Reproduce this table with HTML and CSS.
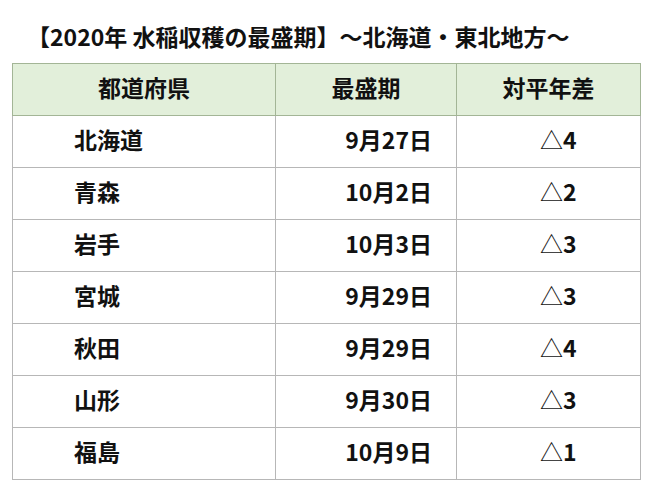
FILE: index.html
```html
<!DOCTYPE html>
<html lang="ja">
<head>
<meta charset="utf-8">
<link rel="stylesheet" href="styles.css">
</head>
<body>
<h1 class="title">【2020年 水稲収穫の最盛期】～北海道・東北地方～</h1>
<table class="harvest">
  <colgroup>
    <col class="c-pref">
    <col class="c-date">
    <col class="c-diff">
  </colgroup>
  <thead>
    <tr><th>都道府県</th><th>最盛期</th><th>対平年差</th></tr>
  </thead>
  <tbody>
    <tr><td class="pref">北海道</td><td class="date">9月27日</td><td class="diff"><span class="tri">△</span>4</td></tr>
    <tr><td class="pref">青森</td><td class="date">10月2日</td><td class="diff"><span class="tri">△</span>2</td></tr>
    <tr><td class="pref">岩手</td><td class="date">10月3日</td><td class="diff"><span class="tri">△</span>3</td></tr>
    <tr><td class="pref">宮城</td><td class="date">9月29日</td><td class="diff"><span class="tri">△</span>3</td></tr>
    <tr><td class="pref">秋田</td><td class="date">9月29日</td><td class="diff"><span class="tri">△</span>4</td></tr>
    <tr><td class="pref">山形</td><td class="date">9月30日</td><td class="diff"><span class="tri">△</span>3</td></tr>
    <tr><td class="pref">福島</td><td class="date">10月9日</td><td class="diff"><span class="tri">△</span>1</td></tr>
  </tbody>
</table>
</body>
</html>
```
FILE: styles.css
```css
html, body {
  margin: 0;
  padding: 0;
  background: #ffffff;
}
body {
  width: 650px;
  height: 492px;
  overflow: hidden;
  font-family: "Noto Sans CJK JP", "Noto Sans", sans-serif;
  color: #111111;
}
.title {
  margin: 0;
  padding: 25px 0 0 27px;
  height: 63px;
  box-sizing: border-box;
  font-size: 23px;
  font-weight: 700;
  line-height: 23px;
  letter-spacing: 0;
  white-space: nowrap;
}
.harvest {
  margin-left: 12px;
  width: 628px;
  border-collapse: collapse;
  table-layout: fixed;
  font-size: 23px;
  font-weight: 700;
}
.c-pref { width: 263px; }
.c-date { width: 181px; }
.c-diff { width: 184px; }
.harvest th,
.harvest td {
  height: 52px;
  padding: 0 0 5px 0;
  box-sizing: border-box;
  line-height: 23px;
  vertical-align: middle;
  border: 1px solid #b7b7b7;
}
.harvest th {
  background: #e2efda;
  border-color: #a3b596;
  text-align: center;
  font-weight: 700;
}
.harvest td.pref {
  padding-left: 61px;
  text-align: left;
}
.harvest td.date {
  padding-right: 24px;
  text-align: right;
}
.harvest td.diff {
  padding-left: 83px;
  text-align: left;
}
.tri {
  font-weight: 400;
}
```
